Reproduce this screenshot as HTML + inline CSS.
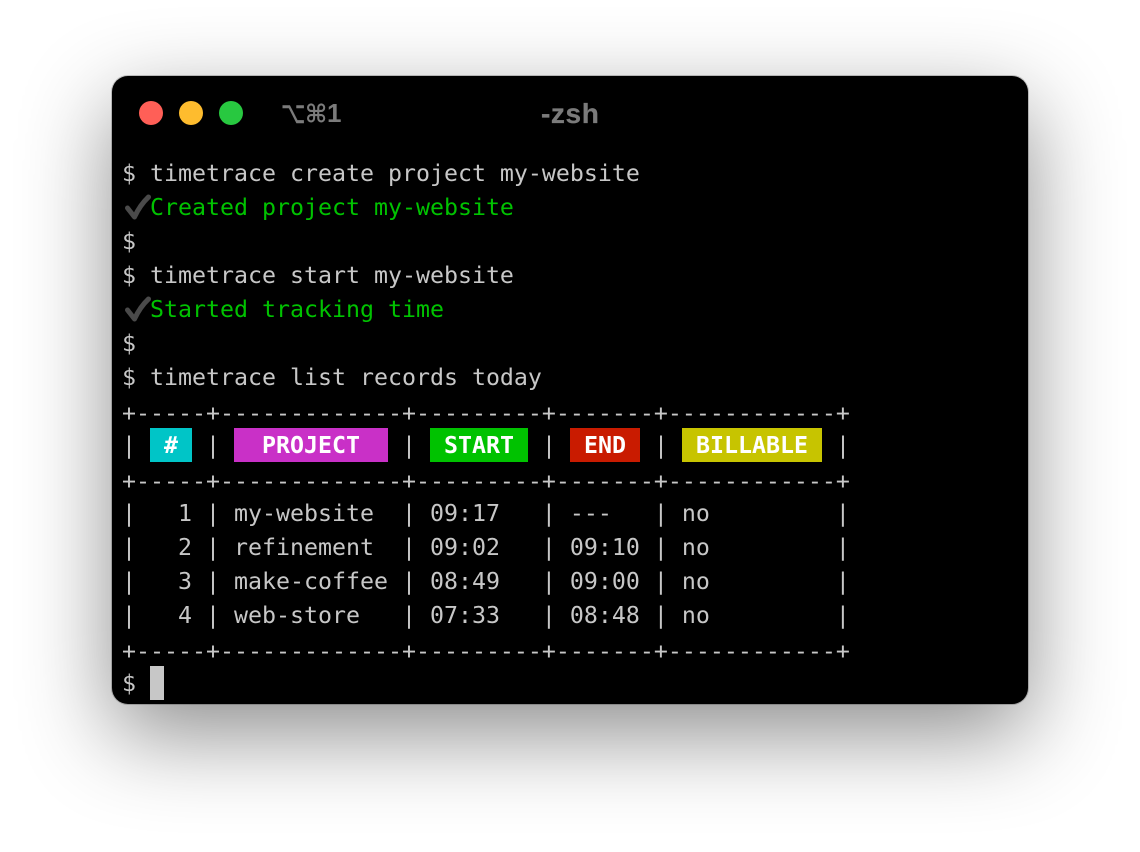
<!DOCTYPE html>
<html>
<head>
<meta charset="utf-8">
<style>
html,body{margin:0;padding:0;width:1140px;height:852px;background:#fff;overflow:hidden}
#win{position:absolute;left:112px;top:76px;width:916px;height:628px;background:#000;border-radius:16px;box-shadow:0 0 0 1px rgba(0,0,0,.2),0 30px 90px rgba(0,0,0,.45)}
.dot{position:absolute;top:101px;width:24px;height:24px;border-radius:50%}
.l{position:absolute;left:122px;height:34px;line-height:34px;font-family:"DejaVu Sans Mono","Liberation Mono",monospace;font-size:23.25px;color:#c7c7c7;white-space:pre;letter-spacing:0;margin-top:1px}
.b{margin-top:3px}
.g{color:#00c200}
.bar{position:absolute;top:428px;height:34px}
.h{font-weight:bold;color:#fff}
.title{position:absolute;font-family:"Liberation Sans",sans-serif;font-weight:bold;color:#7b7b7b;white-space:pre}
#cur{position:absolute;left:150px;top:666px;width:14px;height:34px;background:#c7c7c7}
</style>
</head>
<body>
<div id="win"></div>
<div class="dot" style="left:139px;background:#ff5f57"></div>
<div class="dot" style="left:179px;background:#febc2e"></div>
<div class="dot" style="left:219px;background:#28c840"></div>
<div class="title" style="left:281px;top:97px;font-size:21px;line-height:32px;font-family:'DejaVu Sans',sans-serif;font-weight:normal;-webkit-text-stroke:.4px #7b7b7b;transform:scaleY(1.45);transform-origin:0 50%">⌥</div>
<div class="title" style="left:305px;top:98px;font-size:24px;line-height:32px;font-family:'DejaVu Sans',sans-serif;transform:scaleY(1.05);transform-origin:0 50%">⌘</div>
<div class="title" style="left:327px;top:97px;font-size:26px;line-height:32px">1</div>
<div class="title" style="left:541px;top:98px;font-size:28px;line-height:32px;letter-spacing:.6px;-webkit-text-stroke:.3px #7b7b7b">-zsh</div>

<div class="bar" style="left:150px;width:42px;background:#00c5c7"></div>
<div class="bar" style="left:234px;width:154px;background:#c930c7"></div>
<div class="bar" style="left:430px;width:98px;background:#00c200"></div>
<div class="bar" style="left:570px;width:70px;background:#c91b00"></div>
<div class="bar" style="left:682px;width:140px;background:#c7c400"></div>

<div class="l" style="top:156px">$ timetrace create project my-website</div>
<div class="l g" style="top:190px">  Created project my-website</div>
<div class="l" style="top:224px">$</div>
<div class="l" style="top:258px">$ timetrace start my-website</div>
<div class="l g" style="top:292px">  Started tracking time</div>
<div class="l" style="top:326px">$</div>
<div class="l" style="top:360px">$ timetrace list records today</div>
<div class="l b" style="top:394px">+-----+-------------+---------+-------+------------+</div>
<div class="l" style="top:428px">|  <span class="h">#</span>  |  <span class="h"> PROJECT</span>   |  <span class="h">START</span>  |  <span class="h">END</span>  |  <span class="h">BILLABLE</span>  |</div>
<div class="l b" style="top:462px">+-----+-------------+---------+-------+------------+</div>
<div class="l" style="top:496px">|   1 | my-website  | 09:17   | ---   | no         |</div>
<div class="l" style="top:530px">|   2 | refinement  | 09:02   | 09:10 | no         |</div>
<div class="l" style="top:564px">|   3 | make-coffee | 08:49   | 09:00 | no         |</div>
<div class="l" style="top:598px">|   4 | web-store   | 07:33   | 08:48 | no         |</div>
<div class="l b" style="top:632px">+-----+-------------+---------+-------+------------+</div>
<div class="l" style="top:666px">$</div>
<div id="cur"></div>

<svg style="position:absolute;left:0;top:0" width="1140" height="852" fill="none">
<path d="M127.5 208 L134.5 217 Q140 205 148.5 197" stroke="#4a4a4a" stroke-width="5" stroke-linecap="round" stroke-linejoin="round"/>
<path d="M127.5 310 L134.5 319 Q140 307 148.5 299" stroke="#4a4a4a" stroke-width="5" stroke-linecap="round" stroke-linejoin="round"/>
</svg>
</body>
</html>
